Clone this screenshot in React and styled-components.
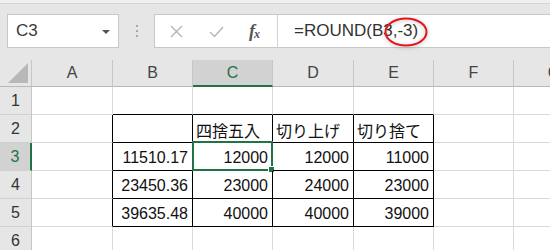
import React from 'react';
import styled, { createGlobalStyle, css } from 'styled-components';

const GlobalStyle = createGlobalStyle`
  body {
    margin: 0;
    background: #fff;
    font-family: "Liberation Sans", "Noto Sans CJK JP", sans-serif;
  }
`;

const COLS = ['A', 'B', 'C', 'D', 'E', 'F', 'G'];
const COL_WIDTHS = '32px 81px 80px 80px 81px 80px 80px 81px';

const rows = {
  2: { C: '四捨五入', D: '切り上げ', E: '切り捨て' },
  3: { B: '11510.17', C: '12000', D: '12000', E: '11000' },
  4: { B: '23450.36', C: '23000', D: '24000', E: '23000' },
  5: { B: '39635.48', C: '40000', D: '40000', E: '39000' },
};

const tableCols = ['B', 'C', 'D', 'E'];
const inTable = (r, c) => r >= 2 && r <= 5 && tableCols.includes(c);

const Page = styled.div`
  width: 550px;
  height: 250px;
  overflow: hidden;
  background: #e6e6e6;
`;

const TopStrip = styled.div`
  height: 3px;
  background: #efefef;
  border-bottom: 1px solid #d4d4d4;
`;

const FormulaBar = styled.div`
  display: flex;
  height: 34px;
  padding: 10px 0 12px 7px;
  background: #e6e6e6;
`;

const NameBox = styled.div`
  width: 112px;
  box-sizing: border-box;
  display: flex;
  align-items: center;
  justify-content: space-between;
  padding: 0 8px 0 8px;
  background: #fff;
  border: 1px solid #c8c8c8;
  font-size: 17px;
  color: #3a3a3a;
`;

const DropArrow = styled.span`
  width: 0;
  height: 0;
  border-left: 4px solid transparent;
  border-right: 4px solid transparent;
  border-top: 4px solid #555;
  margin-top: 1px;
`;

const Grip = styled.div`
  width: 35px;
  display: flex;
  flex-direction: column;
  align-items: center;
  justify-content: center;
  gap: 3px;

  span {
    width: 2px;
    height: 2px;
    background: #a8a8a8;
  }
`;

const FormulaBox = styled.div`
  flex: 1;
  display: flex;
  background: #fff;
  border: 1px solid #c8c8c8;
  border-right: none;
`;

const IconArea = styled.div`
  width: 123px;
  display: flex;
  align-items: center;
  padding-left: 14px;
  gap: 25px;
  border-right: 1px solid #d4d4d4;
  box-sizing: border-box;
`;

const FxText = styled.i`
  font-family: "Liberation Serif", serif;
  font-size: 18px;
  font-weight: bold;
  color: #555;
  letter-spacing: -1px;

  sub {
    font-size: 12px;
    vertical-align: -1px;
  }
`;

const FormulaInput = styled.div`
  position: relative;
  flex: 1;
  display: flex;
  align-items: center;
  padding-left: 16px;
  font-size: 17px;
  color: #333;
`;

const Circle = styled.svg`
  position: absolute;
  left: 106px;
  top: 2px;
  overflow: visible;
  filter: drop-shadow(0 1px 2px rgba(0, 0, 0, 0.25));
`;

const Grid = styled.div`
  display: grid;
  grid-template-columns: ${COL_WIDTHS};
  grid-auto-rows: 28px;
  grid-template-rows: 27px;
  background: #fff;
`;

const HeadCell = styled.div`
  display: flex;
  align-items: center;
  justify-content: center;
  background: ${p => (p.$active ? '#d2d2d2' : '#e6e6e6')};
  color: ${p => (p.$active ? '#217346' : '#444')};
  font-size: 16px;
  border-right: 1px solid #c6c6c6;
  border-bottom: 1px solid #b8b8b8;
  box-sizing: border-box;
  ${p => p.$active && css`border-bottom: 2px solid #217346;`}
`;

const Corner = styled(HeadCell)`
  align-items: flex-end;
  justify-content: flex-end;
  padding: 0 3px 3px 0;
`;

const RowHead = styled.div`
  display: flex;
  align-items: center;
  justify-content: center;
  background: ${p => (p.$active ? '#d2d2d2' : '#e6e6e6')};
  color: ${p => (p.$active ? '#217346' : '#333')};
  font-size: 16px;
  border-bottom: 1px solid #d0d0d0;
  border-right: ${p => (p.$active ? '2px solid #217346' : '1px solid #c6c6c6')};
  box-sizing: border-box;
`;

const Cell = styled.div`
  position: relative;
  display: flex;
  align-items: center;
  justify-content: ${p => (p.$text ? 'flex-start' : 'flex-end')};
  padding: 2px 4px 0 3px;
  font-size: 16px;
  color: #111;
  box-sizing: border-box;
  border-right: 1px solid ${p => (p.$right ? '#000' : '#dadada')};
  border-bottom: 1px solid ${p => (p.$bottom ? '#000' : '#dadada')};
  white-space: nowrap;
`;

const Selection = styled.div`
  position: absolute;
  left: -1px;
  top: -2px;
  right: -1px;
  bottom: -1px;
  border: 2px solid #217346;
  pointer-events: none;

  &::after {
    content: '';
    position: absolute;
    right: -4px;
    bottom: -4px;
    width: 5px;
    height: 5px;
    background: #217346;
    border: 1px solid #fff;
  }
`;

const SmallIcon = ({ children }) => (
  <svg width="15" height="15" viewBox="0 0 15 15" fill="none" stroke="#b5b5b5" strokeWidth="1.4">
    {children}
  </svg>
);

const App = () => {
  const rowNums = [1, 2, 3, 4, 5, 6];

  return (
    <>
      <GlobalStyle />
      <Page>
        <TopStrip />
        <FormulaBar>
          <NameBox>
            C3
            <DropArrow />
          </NameBox>
          <Grip>
            <span />
            <span />
            <span />
          </Grip>
          <FormulaBox>
            <IconArea>
              <SmallIcon>
                <path d="M2 2 L13 13 M13 2 L2 13" />
              </SmallIcon>
              <SmallIcon>
                <path d="M1 8 L5.5 12.5 L14 3" />
              </SmallIcon>
              <FxText>
                f<sub>x</sub>
              </FxText>
            </IconArea>
            <FormulaInput>
              =ROUND(B3,-3)
              <Circle width="44" height="30" viewBox="0 0 44 30">
                <ellipse cx="22" cy="15" rx="20.5" ry="13.5" fill="none" stroke="#e3161b" strokeWidth="2" />
              </Circle>
            </FormulaInput>
          </FormulaBox>
        </FormulaBar>

        <Grid>
          <Corner>
            <svg width="20" height="20" viewBox="0 0 20 20">
              <polygon points="20,0 20,20 0,20" fill="#b8b8b8" />
            </svg>
          </Corner>
          {COLS.map(c => (
            <HeadCell key={c} $active={c === 'C'}>
              {c}
            </HeadCell>
          ))}

          {rowNums.map(r => (
            <React.Fragment key={r}>
              <RowHead $active={r === 3}>{r}</RowHead>
              {COLS.map(c => {
                const value = rows[r] && rows[r][c];
                const right = inTable(r, c) || (c === 'A' && r >= 2 && r <= 5);
                const bottom = inTable(r, c) || (r === 1 && tableCols.includes(c));
                return (
                  <Cell
                    key={c}
                    $right={right}
                    $bottom={bottom}
                    $text={r === 2}
                  >
                    {value}
                    {r === 3 && c === 'C' && <Selection />}
                  </Cell>
                );
              })}
            </React.Fragment>
          ))}
        </Grid>
      </Page>
    </>
  );
};

export default App;
